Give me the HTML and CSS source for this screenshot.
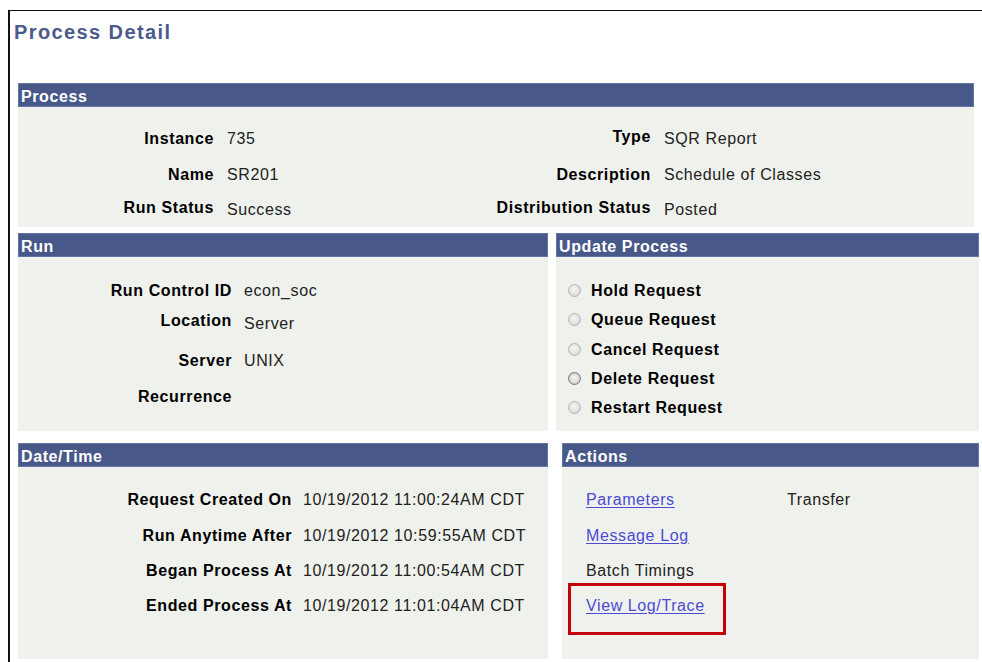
FILE: index.html
```html
<!DOCTYPE html>
<html lang="en">
<head>
<meta charset="utf-8">
<title>Process Detail</title>
<link rel="stylesheet" href="styles.css">
</head>
<body>
<div class="frame">
  <h1 class="page-title">Process Detail</h1>
  <div class="content">
    <section class="group group-process">
      <div class="group-head">Process</div>
      <div class="group-body grid-process">
        <span class="lbl">Instance</span><span class="val">735</span>
        <span class="lbl raise">Type</span><span class="val">SQR Report</span>
        <span class="lbl">Name</span><span class="val">SR201</span>
        <span class="lbl">Description</span><span class="val">Schedule of Classes</span>
        <span class="lbl">Run Status</span><span class="val lower">Success</span>
        <span class="lbl">Distribution Status</span><span class="val lower">Posted</span>
      </div>
    </section>

    <div class="pair pair-run">
      <section class="group group-left">
        <div class="group-head">Run</div>
        <div class="group-body grid-run">
          <span class="lbl">Run Control ID</span><span class="val">econ_soc</span>
          <span class="lbl">Location</span><span class="val lower-3">Server</span>
          <span class="lbl">Server</span><span class="val">UNIX</span>
          <span class="lbl">Recurrence</span><span class="val"></span>
        </div>
      </section>
      <section class="group group-update">
        <div class="group-head">Update Process</div>
        <div class="group-body radio-list">
          <label class="radio-row"><span class="radio"></span>Hold Request</label>
          <label class="radio-row"><span class="radio"></span>Queue Request</label>
          <label class="radio-row"><span class="radio"></span>Cancel Request</label>
          <label class="radio-row"><span class="radio radio-active"></span>Delete Request</label>
          <label class="radio-row"><span class="radio"></span>Restart Request</label>
        </div>
      </section>
    </div>

    <div class="pair pair-dates">
      <section class="group group-left">
        <div class="group-head">Date/Time</div>
        <div class="group-body grid-dates">
          <span class="lbl">Request Created On</span><span class="val">10/19/2012 11:00:24AM CDT</span>
          <span class="lbl">Run Anytime After</span><span class="val">10/19/2012 10:59:55AM CDT</span>
          <span class="lbl">Began Process At</span><span class="val">10/19/2012 11:00:54AM CDT</span>
          <span class="lbl">Ended Process At</span><span class="val">10/19/2012 11:01:04AM CDT</span>
        </div>
      </section>
      <section class="group group-actions">
        <div class="group-head">Actions</div>
        <div class="group-body grid-actions">
          <a class="action-link" href="#">Parameters</a><span class="plain">Transfer</span>
          <a class="action-link" href="#">Message Log</a><span></span>
          <span class="plain">Batch Timings</span><span></span>
          <span class="highlighted"><a class="action-link" href="#">View Log/Trace</a></span><span></span>
        </div>
      </section>
    </div>
  </div>
</div>
</body>
</html>
```

FILE: styles.css
```css
body {
  margin: 0;
  background: #fff;
  font-family: "Liberation Sans", Arial, sans-serif;
  font-size: 16px;
  letter-spacing: 0.6px;
  color: #222;
}

.frame {
  margin: 10px 0 0 8px;
  border-top: 1px solid #111;
  border-left: 2px solid #111;
  height: 651px;
  overflow: hidden;
}

.page-title {
  margin: 0;
  padding: 9px 0 0 4px;
  font-size: 20px;
  line-height: 24px;
  letter-spacing: 1.4px;
  font-weight: bold;
  color: #4c5b8d;
}

.content {
  margin-top: 39px;
  padding-left: 8px;
}

/* section header bar + pale body */
.group-head {
  box-sizing: border-box;
  height: 24px;
  line-height: 23px;
  padding: 1px 0 0 2px;
  background: #485888;
  border: 1px solid #6474a6;
  color: #fff;
  font-weight: bold;
}

.group-body {
  background: #eff1ec;
  line-height: 20px;
}

.group-process { width: 956px; margin-bottom: 6px; }
.group-process .group-body { height: 120px; }

.pair { display: flex; }
.pair-run { column-gap: 8px; margin-bottom: 12px; }
.pair-run .group-body { height: 174px; }
.pair-dates { column-gap: 14px; }
.pair-dates .group-body { height: 192px; }

.group-left { width: 530px; }
.group-update { width: 423px; }
.group-actions { width: 417px; }

.lbl {
  font-weight: bold;
  color: #000;
  text-align: right;
}

.raise { margin-top: -2px; }
.lower { margin-top: 2px; }
.lower-3 { margin-top: 3px; }

/* field grids */
.grid-process {
  box-sizing: border-box;
  padding-top: 22px;
  display: grid;
  grid-template-columns: 196px 180px 257px 1fr;
  grid-template-rows: 36px 33px 20px;
  align-items: start;
}
.grid-process .val { padding-left: 13px; }

.grid-run {
  box-sizing: border-box;
  padding-top: 24px;
  display: grid;
  grid-template-columns: 214px 1fr;
  grid-template-rows: 30px 40px 36px 20px;
  align-items: start;
}
.grid-run .val { padding-left: 12px; }

.grid-dates {
  box-sizing: border-box;
  padding-top: 23px;
  display: grid;
  grid-template-columns: 274px 1fr;
  grid-template-rows: 36px 35px 35px 20px;
  align-items: start;
}
.grid-dates .val { padding-left: 11px; }

.grid-actions {
  box-sizing: border-box;
  padding: 23px 0 0 24px;
  display: grid;
  grid-template-columns: 201px 1fr;
  grid-template-rows: 36px 35px 35px 20px;
  align-items: start;
  justify-items: start;
}

.plain { color: #222; }

.action-link {
  color: #4b4bd4;
  text-decoration: underline;
  text-underline-offset: 2px;
}

/* red call-out frame round the log link */
.highlighted { position: relative; }
.highlighted::after {
  content: "";
  position: absolute;
  left: -18px;
  top: -13px;
  width: 158px;
  height: 52px;
  box-sizing: border-box;
  border: 3px solid #c3000b;
}

/* disabled radio buttons */
.radio-list {
  box-sizing: border-box;
  padding-top: 24px;
  display: flex;
  flex-direction: column;
}

.radio-row {
  height: 29.3px;
  line-height: 20px;
  display: flex;
  align-items: flex-start;
  padding-left: 12px;
  column-gap: 10px;
  font-weight: bold;
  color: #000;
}

.radio {
  box-sizing: border-box;
  width: 13px;
  height: 13px;
  margin-top: 3px;
  border-radius: 50%;
  border: 1px solid #b4b4b4;
  background: radial-gradient(circle at 45% 40%, #f6f6f6 0%, #e0e0e0 60%, #d0d0d0 100%);
}

.radio-active {
  border-color: #7a7a7a;
  box-shadow: inset 0 0 0 1px #cccccc;
  background: radial-gradient(circle at 45% 40%, #f2f2f2 0%, #d8d8d8 70%);
}
```
